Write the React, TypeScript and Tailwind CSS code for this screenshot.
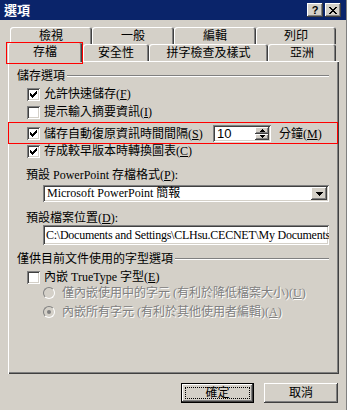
import React from "react";

const raised =
  "shadow-[inset_-1px_-1px_#404040,inset_1px_1px_#ffffff,inset_-2px_-2px_#808080,inset_2px_2px_#d4d0c8]";
const sunken =
  "shadow-[inset_1px_1px_#808080,inset_-1px_-1px_#ffffff,inset_2px_2px_#404040,inset_-2px_-2px_#d4d0c8]";
const tabEdge =
  "shadow-[inset_1px_1px_#ffffff,inset_-1px_0_#404040,inset_-2px_0_#808080]";
const disabledText = "text-[#808080] [text-shadow:1px_1px_0_#ffffff]";

const Check = () => (
  <svg width="7" height="7" viewBox="0 0 7 7" shapeRendering="crispEdges">
    <path
      d="M0 2h1v3H0zM1 3h1v3H1zM2 4h1v3H2zM3 3h1v3H3zM4 2h1v3H4zM5 1h1v3H5zM6 0h1v3H6z"
      fill="#000"
    />
  </svg>
);

const Checkbox = ({ checked }: { checked?: boolean }) => (
  <div
    className={`w-[13px] h-[13px] shrink-0 bg-white flex items-center justify-center ${sunken}`}
  >
    {checked && <Check />}
  </div>
);

const Radio = ({ checked }: { checked?: boolean }) => (
  <div className="w-[12px] h-[12px] shrink-0 rounded-full border border-t-[#808080] border-l-[#808080] border-b-white border-r-white bg-[#d4d0c8] flex items-center justify-center">
    {checked && <div className="w-[4px] h-[4px] rounded-full bg-[#808080]" />}
  </div>
);

const Tri = ({ up, w = 7 }: { up?: boolean; w?: number }) => {
  const h = Math.ceil(w / 2);
  return (
    <svg width={w} height={h} viewBox={`0 0 ${w} ${h}`} shapeRendering="crispEdges">
      <polygon
        points={up ? `${w / 2},0 ${w},${h} 0,${h}` : `0,0 ${w},0 ${w / 2},${h}`}
        fill="#000"
      />
    </svg>
  );
};

const Header = ({ text }: { text: string }) => (
  <div className="flex items-center h-[14px]">
    <span className="leading-[14px] whitespace-nowrap">{text}</span>
    <div className="flex-1 ml-[2px] h-[2px] border-t border-t-[#808080] border-b border-b-white" />
  </div>
);

const CheckRow = ({
  checked,
  label,
  k,
}: {
  checked?: boolean;
  label: string;
  k: string;
}) => (
  <div className="flex items-center h-[16px] pl-[10px] gap-[4px]">
    <Checkbox checked={checked} />
    <span className="leading-[14px] whitespace-nowrap">
      {label}(<u>{k}</u>)
    </span>
  </div>
);

const Tab = ({ label, w }: { label: string; w: string }) => (
  <div
    className={`${w} h-full bg-[#d4d0c8] rounded-t-[3px] ${tabEdge} flex items-center justify-center leading-[14px]`}
  >
    {label}
  </div>
);

export default function App() {
  return (
    <div className="w-[347px] h-[410px] bg-[#d4d0c8] overflow-hidden text-black text-[12px] font-['Liberation_Serif','Noto_Sans_CJK_TC',serif] border-r border-r-[#808080]">
      {/* title bar */}
      <div className="h-[20px] bg-[#0a246a] flex items-center justify-between pl-[4px] pr-[5px]">
        <span className="text-white font-bold text-[13px] leading-[14px] font-['Noto_Sans_CJK_TC',sans-serif]">
          選項
        </span>
        <div className="flex gap-[2px]">
          <div
            className={`w-[16px] h-[14px] bg-[#d4d0c8] ${raised} flex items-center justify-center text-[11px] font-bold leading-none font-['Liberation_Sans',sans-serif]`}
          >
            ?
          </div>
          <div className={`w-[16px] h-[14px] bg-[#d4d0c8] ${raised} flex items-center justify-center`}>
            <svg width="8" height="7" viewBox="0 0 8 7" shapeRendering="crispEdges">
              <path
                d="M0 0h2v1H0zM6 0h2v1H6zM1 1h2v1H1zM5 1h2v1H5zM2 2h4v1H2zM3 3h2v1H3zM2 4h4v1H2zM1 5h2v1H1zM5 5h2v1H5zM0 6h2v1H0zM6 6h2v1H6z"
                fill="#000"
              />
            </svg>
          </div>
        </div>
      </div>

      <div className="pt-[7px] pl-[8px]">
        {/* tabs */}
        <div className="h-[17px] flex pl-[2px]">
          <Tab label="檢視" w="w-[82px]" />
          <Tab label="一般" w="w-[82px]" />
          <Tab label="編輯" w="w-[82px]" />
          <Tab label="列印" w="w-[80px]" />
        </div>
        <div className="h-[17px] flex items-end">
          <div
            className={`relative z-10 w-[74px] h-[20px] mb-[-1px] bg-[#d4d0c8] rounded-t-[3px] ${tabEdge} flex items-center justify-center leading-[14px]`}
          >
            存檔
            <span className="absolute left-[-2px] right-[-1px] top-0 bottom-[-2px] border border-[#ff0000]" />
          </div>
          <div className="w-[1px]" />
          <div className="h-full flex">
            <Tab label="安全性" w="w-[66px]" />
            <Tab label="拼字檢查及樣式" w="w-[119px]" />
            <Tab label="亞洲" w="w-[68px]" />
          </div>
        </div>

        {/* panel */}
        <div className="w-[331px] h-[313px] bg-[#d4d0c8] shadow-[inset_1px_1px_#ffffff,inset_-1px_-1px_#404040,inset_-2px_-2px_#808080] pt-[8px] pl-[9px] pr-[10px]">
          <Header text="儲存選項" />
          <div className="mt-[3px]">
            <CheckRow checked label="允許快速儲存" k="F" />
          </div>
          <div className="mt-[2px]">
            <CheckRow label="提示輸入摘要資訊" k="I" />
          </div>
          <div className="relative mt-[5px] h-[17px] flex items-center pl-[10px]">
            <Checkbox checked />
            <span className="ml-[4px] w-[169px] leading-[14px] whitespace-nowrap">
              儲存自動復原資訊時間間隔(<u>S</u>)
            </span>
            <div className={`w-[58px] h-[17px] bg-white ${sunken} flex p-[2px]`}>
              <span className="flex-1 pl-[2px] leading-[13px] text-[13px] font-['Liberation_Sans',sans-serif]">
                10
              </span>
              <div className="w-[14px] flex flex-col">
                <div className={`flex-1 bg-[#d4d0c8] ${raised} flex items-center justify-center`}>
                  <Tri up w={5} />
                </div>
                <div className={`flex-1 bg-[#d4d0c8] ${raised} flex items-center justify-center`}>
                  <Tri w={5} />
                </div>
              </div>
            </div>
            <span className="ml-[8px] leading-[14px] whitespace-nowrap">
              分鐘(<u>M</u>)
            </span>
            <span className="absolute left-[-9px] right-[-9px] top-[-3px] bottom-[-2px] border border-[#ff0000]" />
          </div>
          <div className="mt-[1px]">
            <CheckRow checked label="存成較早版本時轉換圖表" k="C" />
          </div>

          <div className="mt-[9px] pl-[9px] leading-[14px] whitespace-nowrap">
            預設 PowerPoint 存檔格式(<u>P</u>):
          </div>
          <div className={`mt-[3px] ml-[26px] w-[286px] h-[17px] bg-white ${sunken} flex items-center p-[2px]`}>
            <span className="flex-1 pl-[2px] leading-[13px] whitespace-nowrap">
              Microsoft PowerPoint 簡報
            </span>
            <div className={`w-[16px] h-full bg-[#d4d0c8] ${raised} flex items-center justify-center`}>
              <Tri w={7} />
            </div>
          </div>

          <div className="mt-[9px] pl-[9px] leading-[14px] whitespace-nowrap">
            預設檔案位置(<u>D</u>):
          </div>
          <div className={`ml-[26px] w-[286px] h-[20px] bg-white ${sunken} flex items-center px-[3px] overflow-hidden`}>
            <span className="leading-[14px] whitespace-nowrap tracking-[-0.25px]">
              {"C:\\Documents and Settings\\CLHsu.CECNET\\My Documents"}
            </span>
          </div>

          <div className="mt-[7px]">
            <Header text="僅供目前文件使用的字型選項" />
          </div>
          <div className="mt-[3px]">
            <CheckRow label="內嵌 TrueType 字型" k="E" />
          </div>
          <div className="h-[16px] flex items-center pl-[26px] gap-[7px]">
            <Radio />
            <span className={`leading-[14px] whitespace-nowrap ${disabledText}`}>
              僅內嵌使用中的字元 (有利於降低檔案大小)(<u>U</u>)
            </span>
          </div>
          <div className="mt-[3px] h-[16px] flex items-center pl-[26px] gap-[7px]">
            <Radio checked />
            <span className={`leading-[14px] whitespace-nowrap ${disabledText}`}>
              內嵌所有字元 (有利於其他使用者編輯)(<u>A</u>)
            </span>
          </div>
        </div>
      </div>

      {/* buttons */}
      <div className="mt-[9px] pr-[8px] flex justify-end gap-[10px]">
        <div className="relative w-[73px] h-[20px] border border-black">
          <div className={`w-full h-full bg-[#d4d0c8] ${raised} flex items-center justify-center leading-[14px]`}>
            確定
          </div>
          <span className="absolute inset-[3px] border border-dotted border-black" />
        </div>
        <div className={`w-[74px] h-[20px] bg-[#d4d0c8] ${raised} flex items-center justify-center leading-[14px]`}>
          取消
        </div>
      </div>
    </div>
  );
}
